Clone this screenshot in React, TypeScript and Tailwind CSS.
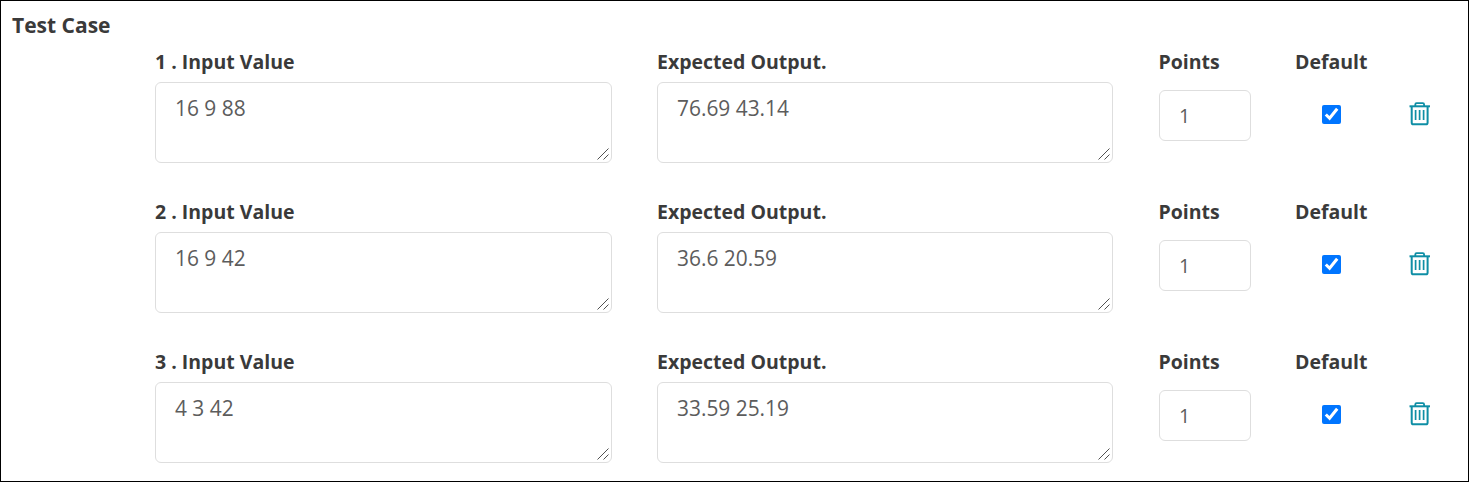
import { useState } from "react";

type TestCase = {
  input: string;
  output: string;
  points: number;
  isDefault: boolean;
};

const initialCases: TestCase[] = [
  { input: "16 9 88", output: "76.69 43.14", points: 1, isDefault: true },
  { input: "16 9 42", output: "36.6 20.59", points: 1, isDefault: true },
  { input: "4 3 42", output: "33.59 25.19", points: 1, isDefault: true },
];

const labelClass = "block h-[42px] pt-[8px] text-[19.5px] leading-[27px] font-bold whitespace-pre text-[#3a3a3a]";

function TrashIcon() {
  return (
    <svg width="22" height="24" viewBox="0 0 22 24" fill="none" stroke="#0f8ea5">
      <path d="M0.5 4.3H21" strokeWidth="2" />
      <path d="M6.3 4V2.4Q6.3 1.2 7.6 1.2H13.8Q15.1 1.2 15.1 2.4V4" strokeWidth="1.8" />
      <path d="M2.7 5V20.4Q2.7 22.3 4.5 22.3H16.8Q18.6 22.3 18.6 20.4V5" strokeWidth="2" />
      <path d="M6.6 8V18M10.6 8V18M14.6 8V18" strokeWidth="1.7" />
    </svg>
  );
}

function TextArea({ value, onChange }: { value: string; onChange: (value: string) => void }) {
  return (
    <div className="relative h-[81px]">
      <textarea
        value={value}
        onChange={(e) => onChange(e.target.value)}
        className="block h-full w-full resize-none overflow-hidden rounded-[6px] border border-[#dedede] bg-white px-[19px] pt-[10px] text-[20.9px] leading-[31px] font-normal text-[#5c5c5c] outline-none"
      />
      {/* Resize grip */}
      <svg
        className="pointer-events-none absolute right-[2px] bottom-[3px]"
        width="13"
        height="12"
        viewBox="0 0 13 12"
        stroke="#505050"
        strokeWidth="1"
      >
        <path d="M0.5 11.5L11.5 0.5M6.5 11.5L11.5 6.5" />
      </svg>
    </div>
  );
}

export default function App() {
  const [cases, setCases] = useState(initialCases);

  const update = (index: number, patch: Partial<TestCase>) => {
    setCases(cases.map((item, i) => (i === index ? { ...item, ...patch } : item)));
  };

  return (
    <div className="h-[482px] overflow-hidden border border-black bg-white pl-[11px] font-['Open_Sans',sans-serif]">
      <h2 className="h-[39px] pt-[9px] text-[21px] leading-[30px] font-bold text-[#3a3a3a]">Test Case</h2>
      <div className="ml-[143px]">
        {cases.map((item, i) => (
          <div key={i} className="flex h-[150px]">
            <div className="w-[457px]">
              <label className={labelClass}>{i + 1} . Input Value</label>
              <TextArea value={item.input} onChange={(input) => update(i, { input })} />
            </div>
            <div className="ml-[45px] w-[456px]">
              <label className={labelClass}>Expected Output.</label>
              <TextArea value={item.output} onChange={(output) => update(i, { output })} />
            </div>
            <div className="ml-[46px] w-[92px]">
              <label className={`${labelClass} -ml-[0.6px]`}>Points</label>
              <input
                value={item.points}
                onChange={(e) => update(i, { points: Number(e.target.value) || 0 })}
                className="mt-[8px] block h-[51px] w-full rounded-[6px] border border-[#dedede] px-[19px] text-[19.5px] font-normal text-[#5c5c5c] outline-none"
              />
            </div>
            <div className="ml-[44px] w-[74px]">
              <label className={labelClass}>Default</label>
              <input
                type="checkbox"
                checked={item.isDefault}
                onChange={(e) => update(i, { isDefault: e.target.checked })}
                className="mt-[23px] ml-[27px] block size-[19px] accent-[#0075ff]"
              />
            </div>
            <button
              type="button"
              aria-label="Delete test case"
              className="mt-[62px] ml-[40px] h-[24px]"
              onClick={() => setCases(cases.filter((_, index) => index !== i))}
            >
              <TrashIcon />
            </button>
          </div>
        ))}
      </div>
    </div>
  );
}
